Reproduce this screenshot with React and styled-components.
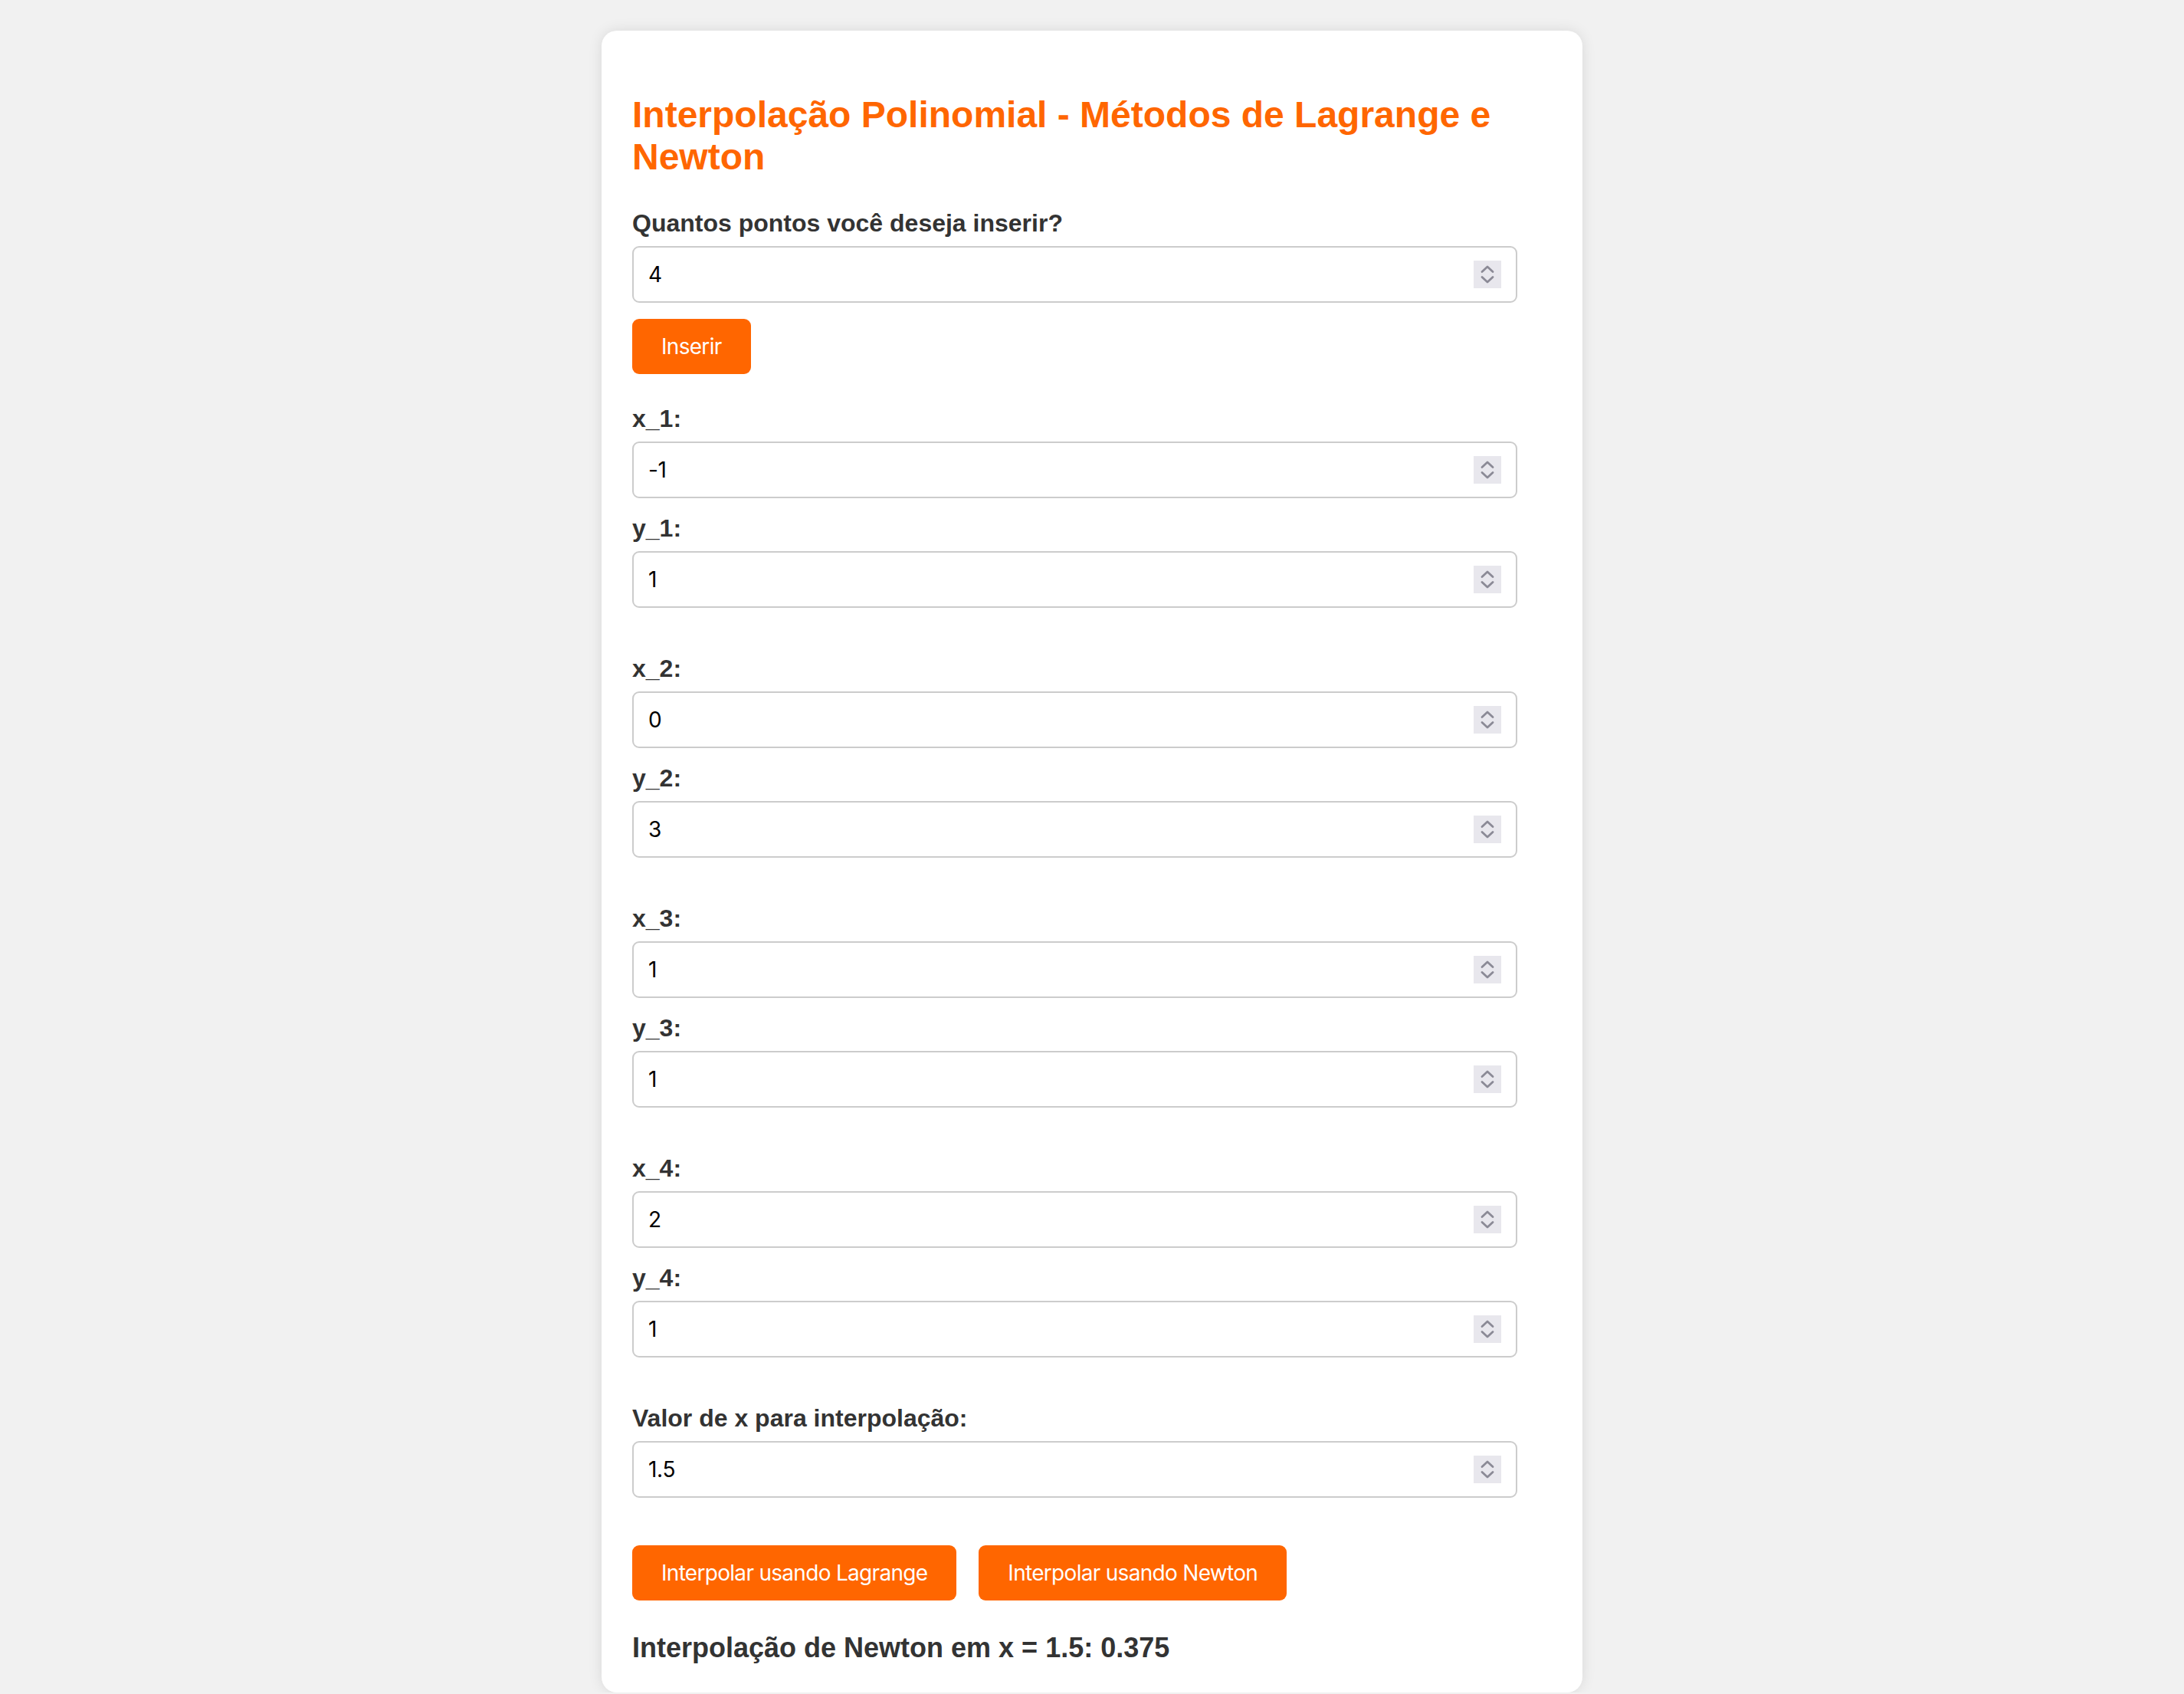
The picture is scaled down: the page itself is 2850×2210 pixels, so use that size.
import React from 'react';
import styled, { createGlobalStyle } from 'styled-components';

const GlobalStyle = createGlobalStyle`
  body {
    margin: 0;
    background: #f1f1f1;
    font-family: "Liberation Sans", Arial, sans-serif;
  }
`;

const Card = styled.div`
  box-sizing: border-box;
  width: 1280px;
  margin: 40px auto 0;
  padding: 43px 40px 38px;
  background: #ffffff;
  border-radius: 20px;
  box-shadow: 0 0 18px rgba(0, 0, 0, 0.1);
  display: flex;
  flex-direction: column;
  align-items: flex-start;
`;

const Title = styled.h2`
  margin: 39px 0 41px;
  font-family: "Liberation Sans", Arial, sans-serif;
  font-weight: 700;
  font-size: 48px;
  line-height: 55px;
  color: #ff6600;
`;

const Label = styled.label`
  display: block;
  margin-bottom: 11px;
  font-family: "Liberation Sans", Arial, sans-serif;
  font-weight: 700;
  font-size: 32px;
  line-height: 37px;
  color: #333333;
`;

const InputWrap = styled.div`
  position: relative;
  width: 1155px;
  margin-bottom: 21px;
`;

const NumberInput = styled.input`
  box-sizing: border-box;
  width: 100%;
  height: 74px;
  padding: 0 70px 0 19px;
  border: 2px solid #cccccc;
  border-radius: 9px;
  background: #ffffff;
  font-family: Inter, "Noto Sans", sans-serif;
  font-size: 28px;
  letter-spacing: -0.3px;
  color: #000000;
  outline: none;
  -moz-appearance: textfield;

  &::-webkit-inner-spin-button,
  &::-webkit-outer-spin-button {
    -webkit-appearance: none;
    margin: 0;
  }
`;

// the mac-style stepper drawn over the right edge of the input
const Spinner = styled.span`
  position: absolute;
  top: 19px;
  right: 21px;
  width: 36px;
  height: 36px;
  background: #e8e7ed;
  display: flex;
  align-items: center;
  justify-content: center;
  pointer-events: none;
`;

const Button = styled.button`
  height: 72px;
  padding: 0 38px;
  border: none;
  border-radius: 9px;
  background: #ff6600;
  color: #ffffff;
  font-family: Inter, "Noto Sans", sans-serif;
  font-size: 28px;
  letter-spacing: -0.7px;
  cursor: pointer;
  margin-bottom: ${(p) => p.$mb || 0}px;
`;

const PointGroup = styled.div`
  margin-bottom: 40px;
`;

const ButtonRow = styled.div`
  display: flex;
  gap: 29px;
  margin: 41px 0 41px;
`;

const Result = styled.h3`
  margin: 0;
  font-family: "Liberation Sans", Arial, sans-serif;
  font-weight: 700;
  font-size: 36px;
  line-height: 41px;
  color: #333333;
`;

function Stepper() {
  return (
    <Spinner>
      <svg width="36" height="36" viewBox="0 0 36 36" fill="none">
        <polyline points="11,14.5 18,8 25,14.5" stroke="#8b8a96" strokeWidth="2.8" strokeLinecap="round" strokeLinejoin="round" />
        <polyline points="11,21.5 18,28 25,21.5" stroke="#8b8a96" strokeWidth="2.8" strokeLinecap="round" strokeLinejoin="round" />
      </svg>
    </Spinner>
  );
}

function Field({ label, value }) {
  return (
    <>
      <Label>{label}</Label>
      <InputWrap>
        <NumberInput type="number" defaultValue={value} />
        <Stepper />
      </InputWrap>
    </>
  );
}

const points = [
  { x: -1, y: 1 },
  { x: 0, y: 3 },
  { x: 1, y: 1 },
  { x: 2, y: 1 },
];

export default function App() {
  return (
    <>
      <GlobalStyle />
      <Card>
        <Title>Interpolação Polinomial - Métodos de Lagrange e Newton</Title>
        <Field label="Quantos pontos você deseja inserir?" value={4} />
        <Button $mb={40}>Inserir</Button>
        {points.map((p, i) => (
          <PointGroup key={i}>
            <Field label={`x_${i + 1}:`} value={p.x} />
            <Field label={`y_${i + 1}:`} value={p.y} />
          </PointGroup>
        ))}
        <Field label="Valor de x para interpolação:" value={1.5} />
        <ButtonRow>
          <Button>Interpolar usando Lagrange</Button>
          <Button>Interpolar usando Newton</Button>
        </ButtonRow>
        <Result>Interpolação de Newton em x = 1.5: 0.375</Result>
      </Card>
    </>
  );
}
